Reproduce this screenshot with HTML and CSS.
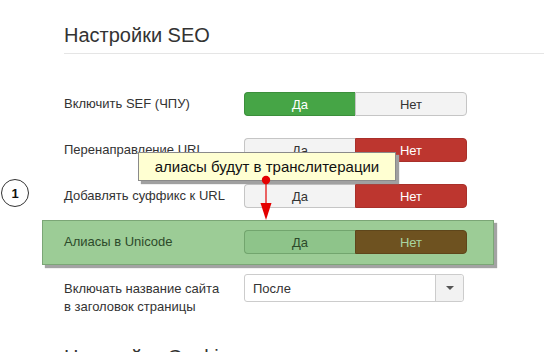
FILE: index.html
```html
<!DOCTYPE html>
<html lang="ru">

<head>
    <meta charset="UTF-8">
    <meta name="viewport" content="width=device-width, initial-scale=1.0">
    <title>Настройки SEO</title>
    <link rel="stylesheet" href="styles.css">
</head>

<body>
    <div class="page">
        <h2 class="legend">Настройки SEO</h2>

        <div class="group">
            <label class="glabel">Включить SEF (ЧПУ)</label>
            <div class="toggle">
                <span class="btn yes">Да</span>
                <span class="btn">Нет</span>
            </div>
        </div>

        <div class="group">
            <label class="glabel">Перенаправление URL</label>
            <div class="toggle">
                <span class="btn">Да</span>
                <span class="btn no">Нет</span>
            </div>
        </div>

        <div class="group">
            <label class="glabel">Добавлять суффикс к URL</label>
            <div class="toggle">
                <span class="btn">Да</span>
                <span class="btn no">Нет</span>
            </div>
        </div>

        <!-- подсвеченная строка -->
        <div class="group mark">
            <label class="glabel">Алиасы в Unicode</label>
            <div class="toggle">
                <span class="btn">Да</span>
                <span class="btn no">Нет</span>
            </div>
        </div>

        <div class="group tall">
            <label class="glabel">Включать название сайта<br>в заголовок страницы</label>
            <div class="select">
                <span class="select-value">После</span>
                <span class="select-arrow"><i class="caret"></i></span>
            </div>
        </div>

        <h2 class="legend next">Настройки Cookie</h2>

        <!-- пометки поверх формы -->
        <div class="step">1</div>
        <div class="hint">алиасы будут в транслитерации</div>
        <svg class="pointer" width="16" height="48" viewBox="0 0 16 48">
            <line x1="8" y1="6" x2="8" y2="31" stroke="#e40000" stroke-width="1.2" />
            <polygon points="2.5,29 13.5,29 8,46" fill="#e40000" />
            <circle cx="8" cy="6" r="4.2" fill="#e40000" />
        </svg>
    </div>
</body>

</html>
```

FILE: styles.css
```css
* {
    margin: 0;
    padding: 0;
    box-sizing: border-box;
}

body {
    font-family: "Liberation Sans", Arial, sans-serif;
    font-size: 13px;
    color: #333;
    background: #fff;
    overflow: hidden;
}

.page {
    position: relative;
    padding: 23px 0 0 64px;
    height: 352px;
    overflow: hidden;
}

.legend {
    font-size: 20px;
    font-weight: normal;
    line-height: 24px;
    color: #333;
    padding-bottom: 6px;
    border-bottom: 1px solid #e5e5e5;
    margin-bottom: 38px;
}

.legend.next {
    margin-top: 29px;
    border-bottom: none;
}

.group {
    display: flex;
    align-items: center;
    margin-bottom: 22px;
}

.glabel {
    width: 180px;
    line-height: 18px;
}

.toggle {
    display: flex;
    width: 223px;
    height: 24px;
}

.toggle .btn {
    flex: 1;
    display: flex;
    align-items: center;
    justify-content: center;
    background: #f3f3f3;
    border: 1px solid #c5c5c5;
    color: #333;
}

.toggle .btn:first-child {
    border-radius: 4px 0 0 4px;
    border-right: none;
}

.toggle .btn:last-child {
    border-radius: 0 4px 4px 0;
}

.toggle .yes {
    background: #46a546;
    border-color: #3b8f3b;
    color: #fff;
}

.toggle .no {
    background: #bd362f;
    border-color: #a9302a;
    color: #fff;
}

/* строка с подсветкой */
.group.mark {
    width: fit-content;
    margin: -10px 0 9px -22px;
    padding: 9px 26px 10px 21px;
    background: #9ccc96;
    border: 1px solid #7ba676;
    box-shadow: 3px 3px 1px #a3a3a3;
}

.group.mark .glabel {
    color: #2c4a2a;
}

.group.mark .btn {
    background: #8ec48a;
    border-color: #72a56e;
    color: #2c4a2a;
}

.group.mark .no {
    background: #6e5220;
    border-color: #5e461b;
    color: #a8d6a1;
}

.group.tall {
    align-items: flex-start;
}

.group.tall .glabel {
    padding-top: 6px;
}

.select {
    display: flex;
    width: 220px;
    height: 28px;
    border: 1px solid #ccc;
    border-radius: 3px;
    background: #fff;
}

.select-value {
    flex: 1;
    display: flex;
    align-items: center;
    padding-left: 8px;
    color: #333;
}

.select-arrow {
    width: 28px;
    display: flex;
    align-items: center;
    justify-content: center;
    background: #f2f2f2;
    border-left: 1px solid #ccc;
    border-radius: 0 3px 3px 0;
}

.caret {
    width: 0;
    height: 0;
    border-left: 4px solid transparent;
    border-right: 4px solid transparent;
    border-top: 4px solid #555;
}

.step {
    position: absolute;
    left: 1px;
    top: 179px;
    width: 28px;
    height: 28px;
    border: 1.5px solid #333;
    border-radius: 50%;
    display: flex;
    align-items: center;
    justify-content: center;
    font-weight: bold;
    font-size: 13px;
    color: #111;
}

.hint {
    position: absolute;
    left: 138px;
    top: 152px;
    width: 258px;
    height: 29px;
    display: flex;
    align-items: center;
    justify-content: center;
    background: #ffffd2;
    border: 1px solid #8a8a8a;
    box-shadow: 3px 3px 1px #a0a0a0;
    font-size: 15px;
    color: #111;
}

.pointer {
    position: absolute;
    left: 258px;
    top: 174px;
}
```
